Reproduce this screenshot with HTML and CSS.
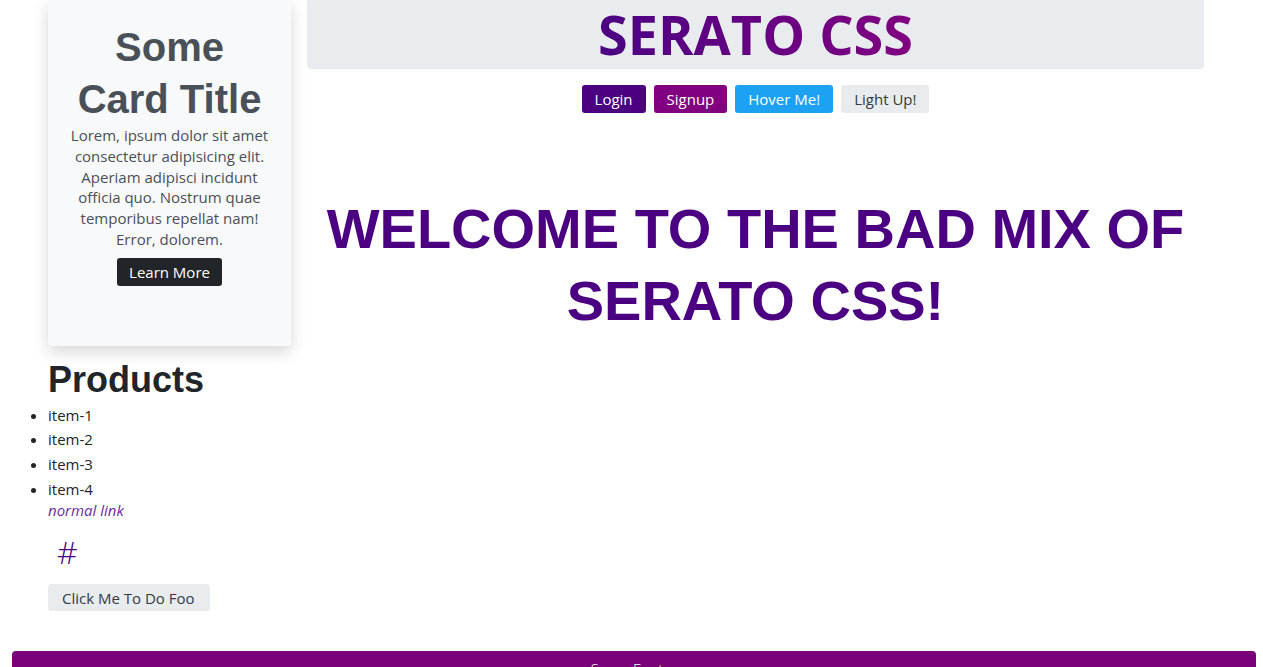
FILE: index.html
```html
<!DOCTYPE html>
<html lang="en">
<head>
<meta charset="utf-8">
<title>Serato CSS</title>
<link rel="stylesheet" href="styles.css">
</head>
<body>
<div class="page">
  <aside class="side">
    <div class="card">
      <h2 class="card-title">Some Card Title</h2>
      <p class="card-text">Lorem, ipsum dolor sit amet consectetur adipisicing elit. Aperiam adipisci incidunt officia quo. Nostrum quae temporibus repellat nam! Error, dolorem.</p>
      <button class="btn btn-dark">Learn More</button>
    </div>
    <h2 class="products-title">Products</h2>
    <ul class="products">
      <li>item-1</li>
      <li>item-2</li>
      <li>item-3</li>
      <li>item-4</li>
    </ul>
    <a class="normal-link" href="#">normal link</a>
    <a class="hash" href="#">#</a>
    <button class="btn btn-light foo">Click Me To Do Foo</button>
  </aside>
  <main class="main">
    <header class="jumbo">
      <h1 class="brand">SERATO CSS</h1>
    </header>
    <nav class="actions">
      <button class="btn btn-indigo">Login</button>
      <button class="btn btn-purple">Signup</button>
      <button class="btn btn-sky">Hover Me!</button>
      <button class="btn btn-light">Light Up!</button>
    </nav>
    <h1 class="welcome">WELCOME TO THE BAD MIX OF SERATO CSS!</h1>
  </main>
</div>
<footer class="footer">Some Footer</footer>
</body>
</html>
```

FILE: styles.css
```css
* { box-sizing: border-box; }

body {
  margin: 0;
  font-family: "Open Sans", "Noto Sans", sans-serif;
  font-size: 15px;
  color: #212529;
  background: #fff;
}

.page {
  display: grid;
  grid-template-columns: 243px 897px;
  column-gap: 16px;
  padding-left: 48px;
  align-items: start;
}

.side {
  display: flex;
  flex-direction: column;
  align-items: flex-start;
}

.card {
  width: 243px;
  background: #f8f9fa;
  border-radius: 0 0 4px 4px;
  box-shadow: 0 6px 16px rgba(0, 0, 0, 0.16);
  padding: 21px 16px 60px;
  text-align: center;
  color: #495057;
}

.card-title {
  margin: 0;
  font-family: "Liberation Sans", Arial, sans-serif;
  font-weight: 700;
  font-size: 40px;
  line-height: 52px;
}

.card-text {
  margin: 0 0 8px;
  line-height: 20.8px;
}

.btn {
  font-family: "Open Sans", "Noto Sans", sans-serif;
  font-size: 15px;
  line-height: 22px;
  border: 0;
  border-radius: 3px;
  padding: 3px 13px;
  cursor: pointer;
}

.btn-dark { background: #212529; color: #fff; padding: 3px 12px; }
.btn-light { background: #e9ecef; color: #343a40; }
.btn-indigo { background: #4b0082; color: #fff; }
.btn-purple { background: #800080; color: #fff; }
.btn-sky { background: #1da1f2; color: #fff; }

.products-title {
  margin: 14px 0 3px;
  font-family: "Liberation Sans", Arial, sans-serif;
  font-weight: 700;
  font-size: 36px;
  line-height: 40px;
}

.products {
  margin: 0;
  padding: 0;
  line-height: 24.7px;
}

.normal-link {
  font-style: italic;
  color: #6a2ca0;
  text-decoration: none;
  line-height: 16px;
}

.hash {
  margin: 14px 0 0 9px;
  font-size: 32px;
  line-height: 40px;
  font-weight: 300;
  color: #4b0082;
  text-decoration: none;
}

.foo {
  margin-top: 12px;
  padding: 3px 15px 2px 14px;
  height: 27px;
}

.main {
  display: flex;
  flex-direction: column;
  align-items: center;
}

.jumbo {
  width: 100%;
  height: 69px;
  background: #e9ecef;
  border-radius: 0 0 4px 4px;
  display: flex;
  justify-content: center;
  align-items: center;
}

.brand {
  margin: 0;
  font-family: "Open Sans", "Noto Sans", sans-serif;
  font-weight: 700;
  font-size: 54px;
  line-height: 69px;
  background: linear-gradient(90deg, #4b0082, #800080);
  -webkit-background-clip: text;
  background-clip: text;
  color: transparent;
}

.actions {
  display: flex;
  gap: 8px;
  margin-top: 16px;
}

.welcome {
  margin: 80px 0 0;
  text-align: center;
  font-family: "Liberation Sans", Arial, sans-serif;
  font-weight: 700;
  font-size: 56px;
  line-height: 72px;
  color: #4b0082;
}

.footer {
  margin: 40px 7px 0 12px;
  background: #7a007a;
  color: #fff;
  border-radius: 4px 4px 0 0;
  text-align: center;
  padding: 8px;
  font-weight: 300;
}
```
